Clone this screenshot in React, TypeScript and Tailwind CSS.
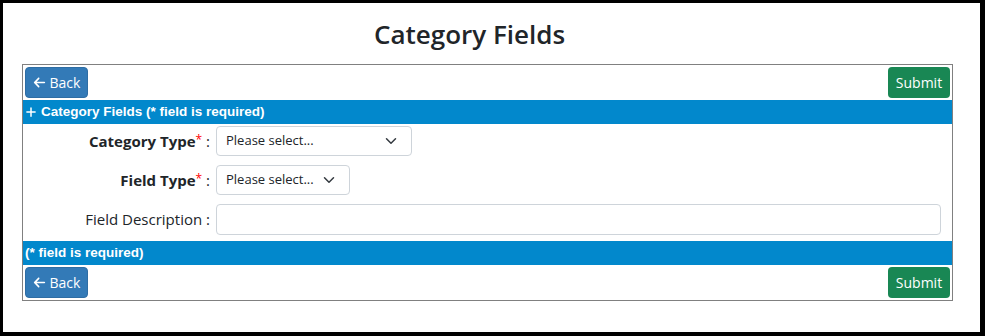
import React from "react";

function ArrowLeft() {
  return (
    <svg width="13" height="13" viewBox="0 0 448 512" fill="currentColor" className="mr-[4px]">
      <path d="M9.4 233.4c-12.5 12.5-12.5 32.8 0 45.3l160 160c12.5 12.5 32.8 12.5 45.3 0s12.5-32.8 0-45.3L109.2 288 416 288c17.7 0 32-14.3 32-32s-14.3-32-32-32l-306.7 0L214.6 118.6c12.5-12.5 12.5-32.8 0-45.3s-32.8-12.5-45.3 0l-160 160z" />
    </svg>
  );
}

function Plus() {
  return (
    <svg width="12" height="12" viewBox="0 0 448 512" fill="currentColor" className="mr-[4px]">
      <path d="M256 80c0-17.7-14.3-32-32-32s-32 14.3-32 32l0 144L48 224c-17.7 0-32 14.3-32 32s14.3 32 32 32l144 0 0 144c0 17.7 14.3 32 32 32s32-14.3 32-32l0-144 144 0c17.7 0 32-14.3 32-32s-14.3-32-32-32l-144 0 0-144z" />
    </svg>
  );
}

function Chevron() {
  return (
    <svg width="12" height="12" viewBox="0 0 16 16" fill="none" stroke="#343a40" strokeWidth="2" strokeLinecap="round" strokeLinejoin="round">
      <path d="M2 5l6 6 6-6" />
    </svg>
  );
}

function BackBtn() {
  return (
    <button className="flex items-center h-[31px] w-[63px] justify-center rounded-[4px] bg-[#337ab7] border border-[#2e6da4] text-white text-[14px] leading-none" style={{ fontFamily: '"Open Sans", sans-serif' }}>
      <ArrowLeft />
      Back
    </button>
  );
}

function SubmitBtn() {
  return (
    <button className="flex items-center h-[31px] w-[62px] justify-center rounded-[4px] bg-[#198754] text-white text-[14px] leading-none" style={{ fontFamily: '"Open Sans", sans-serif' }}>
      Submit
    </button>
  );
}

function Select({ w }: { w: string }) {
  return (
    <div className={`${w} h-[30px] flex items-center justify-between border border-[#ced4da] rounded-[4px] pl-[9px] pr-[14px] text-[13px] text-[#212529] bg-white`}>
      <span>Please select...</span>
      <Chevron />
    </div>
  );
}

function Req() {
  return <span className="text-[#ff0000] text-[12px] align-[3px] font-normal">*</span>;
}

export default function App() {
  const font = { fontFamily: '"Open Sans", "Noto Sans", sans-serif' };
  const arial = { fontFamily: '"Liberation Sans", Arial, sans-serif' };
  return (
    <div className="w-[985px] h-[336px] bg-black pt-[3px] pl-[3px] pr-[5px] pb-[4px]">
      <div className="w-full h-full bg-white text-[#212529]" style={font}>
        <div className="h-[61px] flex items-center justify-center pr-[44px]">
          <h1 className="text-[26px] font-semibold text-[#212529] leading-none mt-[1px]">Category Fields</h1>
        </div>
        <div className="ml-[19px] w-[931px] h-[237px] border border-[#808080] flex flex-col">
          <div className="flex justify-between px-[2px] pt-[2px] h-[35px]">
            <BackBtn />
            <SubmitBtn />
          </div>
          <div className="h-[24px] bg-[#0288cc] text-white font-bold text-[13.5px] flex items-center pl-[2px]" style={arial}>
            <Plus />
            Category Fields (* field is required)
          </div>
          <div className="flex flex-col gap-[9px] pt-[2px] pb-[6px]">
            <div className="flex items-center h-[30px]">
              <div className="w-[190px] text-right text-[15px] pr-[3px]">
                <span className="font-bold">Category Type</span>
                <Req /> :
              </div>
              <div className="pl-[3px]">
                <Select w="w-[196px]" />
              </div>
            </div>
            <div className="flex items-center h-[30px]">
              <div className="w-[190px] text-right text-[15px] pr-[3px]">
                <span className="font-bold">Field Type</span>
                <Req /> :
              </div>
              <div className="pl-[3px]">
                <Select w="w-[134px]" />
              </div>
            </div>
            <div className="flex items-center h-[31px]">
              <div className="w-[190px] text-right text-[15px] pr-[3px]">Field Description :</div>
              <div className="pl-[3px]">
                <div className="w-[725px] h-[31px] border border-[#ced4da] rounded-[4px]" />
              </div>
            </div>
          </div>
          <div className="h-[24px] bg-[#0288cc] text-white font-bold text-[13.5px] flex items-center pl-[2px]" style={arial}>
            (* field is required)
          </div>
          <div className="flex justify-between px-[2px] pt-[2px]">
            <BackBtn />
            <SubmitBtn />
          </div>
        </div>
      </div>
    </div>
  );
}
